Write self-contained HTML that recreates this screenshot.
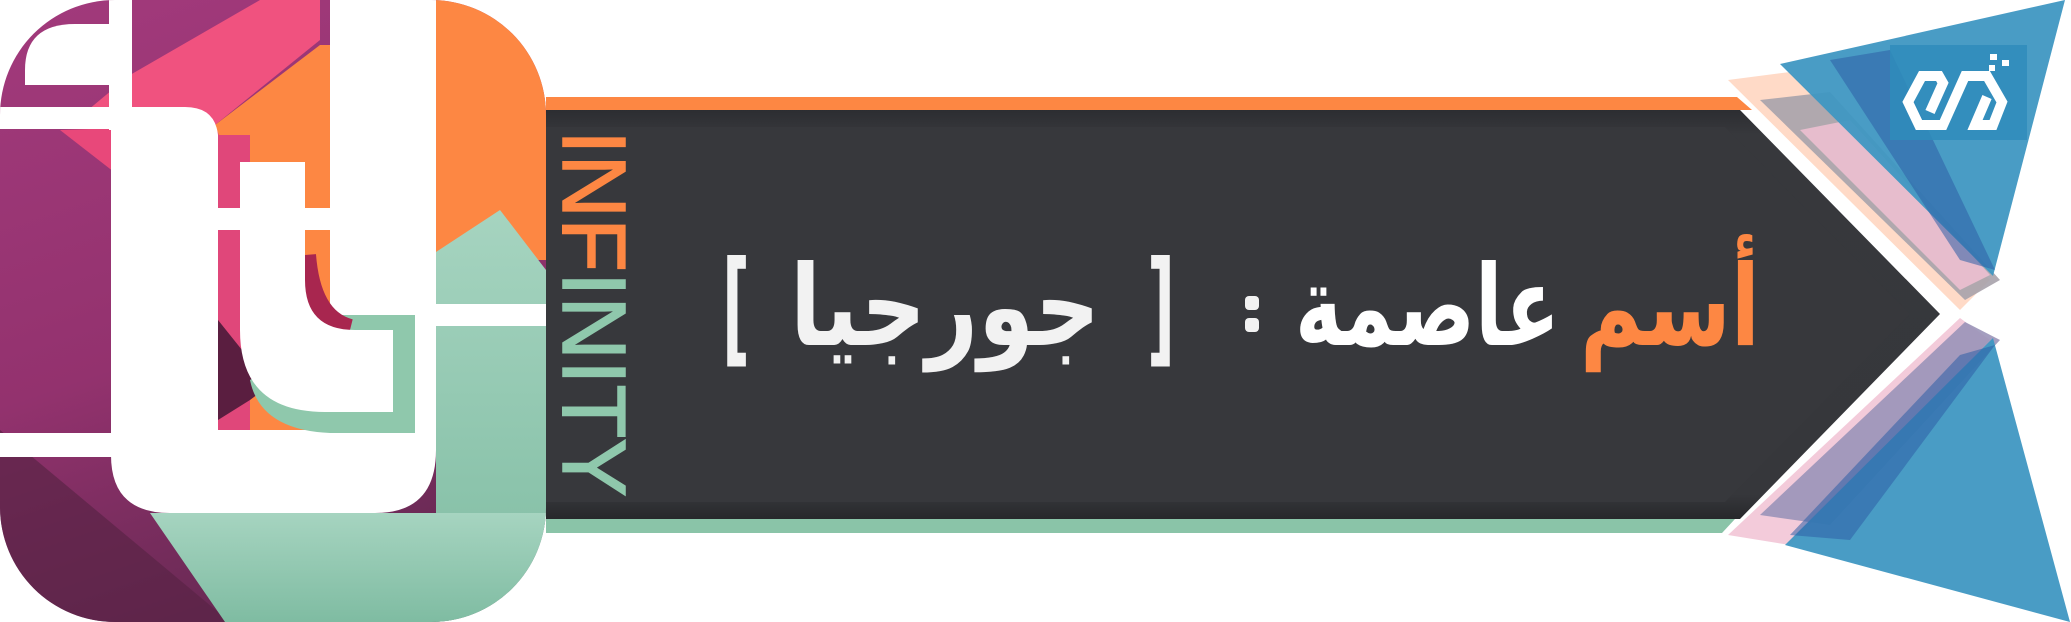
<!DOCTYPE html>
<html><head><meta charset="utf-8"><style>
html,body{margin:0;padding:0;background:#fff;width:2071px;height:622px;overflow:hidden}
svg{display:block}
</style></head><body>
<svg width="2071" height="622" viewBox="0 0 2071 622" xmlns="http://www.w3.org/2000/svg">
<defs>
<clipPath id="lg"><rect x="0" y="0" width="546" height="622" rx="115"/></clipPath>
<linearGradient id="pur" x1="0" y1="0" x2="0.3" y2="1"><stop offset="0" stop-color="#a23a7c"/><stop offset="0.6" stop-color="#93326e"/><stop offset="1" stop-color="#6a2a55"/></linearGradient>
<linearGradient id="grn" x1="0" y1="0" x2="0" y2="1"><stop offset="0" stop-color="#a6d4c0"/><stop offset="1" stop-color="#7fbca2"/></linearGradient>
<linearGradient id="dk" x1="0" y1="0" x2="0" y2="1"><stop offset="0" stop-color="#2c2d31"/><stop offset="0.06" stop-color="#37383c"/><stop offset="0.94" stop-color="#36373b"/><stop offset="1" stop-color="#27282b"/></linearGradient>
</defs>

<!-- LOGO -->
<g clip-path="url(#lg)">
  <rect x="0" y="0" width="546" height="622" fill="url(#pur)"/>
  <polygon points="0,430 230,622 0,622" fill="#5a2446" opacity="0.7"/>
  <polygon points="130,75 260,0 320,0 320,40 215,125 70,125" fill="#f0527f"/>
  <polygon points="60,130 215,125 280,200 150,200" fill="#e8487a"/>
  <polygon points="215,125 320,45 330,45 330,225 255,225" fill="#fd8743"/>
  <rect x="436" y="0" width="110" height="260" fill="#fd8743"/>
  <polygon points="436,252 500,210 546,270 546,622 436,622" fill="url(#grn)"/>
  <polygon points="150,513 546,513 546,622 225,622" fill="url(#grn)"/>
  <path d="M25,85 L25,70 Q25,24 75,24 L109,24 L109,85 Z" fill="#fff"/>
  <rect x="109" y="0" width="23" height="130" fill="#fff"/>
  <rect x="0" y="107" width="120" height="22" fill="#fff"/>
  <rect x="0" y="433" width="120" height="24" fill="#fff"/>
  <rect x="436" y="304" width="110" height="22" fill="#fff"/>
  <path d="M111,107 L185,107 Q215,107 218,135 L218,430 L330,430 L330,0 L436,0 L436,450 Q436,513 375,513 L170,513 Q111,513 111,455 Z" fill="#fff"/>
  <rect x="218" y="135" width="112" height="295" fill="#fd8743"/>
  <polygon points="218,135 250,135 250,430 218,430" fill="#e0477a"/>
  <polygon points="218,320 250,360 270,385 250,400 218,420" fill="#5a1e40"/>
  <path d="M250,380 Q260,430 330,433 L415,433 L415,315 L330,315 L330,330 Z" fill="#8fc8ac"/>
  <path d="M305,255 Q310,320 350,330" stroke="#a8264f" stroke-width="22" fill="none"/>
  <path d="M240,162 L305,162 L305,280 Q305,330 355,330 L393,330 L393,412 L325,412 Q240,412 240,330 Z" fill="#fff"/>
  <rect x="218" y="208" width="117" height="22" fill="#fff"/>
</g>

<!-- BANNER -->
<polygon points="546,97 1737,97 1752,110 546,110" fill="#fd8743"/>
<polygon points="546,519 1735,519 1722,533 546,533" fill="#8ac4a8"/>
<polygon points="546,110 1740,110 1940,314 1740,519 546,519" fill="url(#dk)"/>
<polygon points="546,127 1725,127 1910,314 1725,502 546,502" fill="#37383c"/>

<!-- pastel stripes -->
<polygon points="1728,80 1790,72 1990,280 1960,310" fill="#ffd8c4" opacity="0.95"/>
<polygon points="1760,100 1830,92 2000,280 1965,300" fill="#a7a2ab" opacity="0.9"/>
<polygon points="1800,130 1850,120 1990,275 1960,290" fill="#f5c2d4" opacity="0.8"/>
<polygon points="1728,535 1790,545 1990,340 1960,318" fill="#f2c8d8" opacity="0.95"/>
<polygon points="1760,515 1830,525 2000,340 1965,322" fill="#9a94b8" opacity="0.9"/>

<!-- blue triangles -->
<polygon points="1780,64 2065,0 1993,276" fill="#3f97c2" opacity="0.95"/>
<polygon points="1830,60 1890,50 1995,270 1960,260" fill="#2d5fa6" opacity="0.55"/>
<polygon points="1785,545 2070,622 1993,338" fill="#3f97c2" opacity="0.95"/>
<polygon points="1790,535 1850,540 1995,345 1960,355" fill="#2d5fa6" opacity="0.55"/>
<rect x="1890" y="45" width="137" height="95" fill="#2f8cbb" opacity="0.85"/>
<path d="M1930,112 L1943,83 L1939,76 L1922,76 L1908,102 L1919,125 L1943,125 L1965,76 L1987,76 L2002,102 L1993,125 L1975,125 L1987,97" fill="none" stroke="#fff" stroke-width="10" stroke-linejoin="miter"/>
<rect x="1990" y="54" width="7" height="6" fill="#fff"/>
<rect x="2002" y="60" width="7" height="6" fill="#fff"/>
<rect x="1989" y="65" width="6" height="6" fill="#fff"/>

<!-- INFINITY -->
<text transform="translate(563,130) rotate(90)" font-family="Liberation Sans, sans-serif" font-size="90" textLength="367" lengthAdjust="spacingAndGlyphs" fill="#fd8743" stroke="#fd8743" stroke-width="1.5"><tspan>INF</tspan><tspan fill="#8fc8ac" stroke="#8fc8ac">INITY</tspan></text>

<!-- Arabic text -->
<g font-family="DejaVu Sans, sans-serif" font-weight="bold">
  <text x="722" y="350" font-size="125" fill="#f2f2f2" textLength="28" lengthAdjust="spacingAndGlyphs">[</text>
  <text x="790" y="345" font-size="112" fill="#f2f2f2" textLength="310" lengthAdjust="spacingAndGlyphs">جورجيا</text>
  <text x="1147" y="350" font-size="125" fill="#f2f2f2" textLength="28" lengthAdjust="spacingAndGlyphs">]</text>
  <text x="1295" y="345" font-size="112" fill="#ffffff" textLength="265" lengthAdjust="spacingAndGlyphs">عاصمة</text>
  <text x="1580" y="345" font-size="112" fill="#fd8743" textLength="180" lengthAdjust="spacingAndGlyphs">أسم</text>
</g>
<rect x="1245" y="296" width="14" height="14" rx="4" fill="#f2f2f2"/>
<rect x="1245" y="318" width="14" height="14" rx="4" fill="#f2f2f2"/>
</svg>
</body></html>
